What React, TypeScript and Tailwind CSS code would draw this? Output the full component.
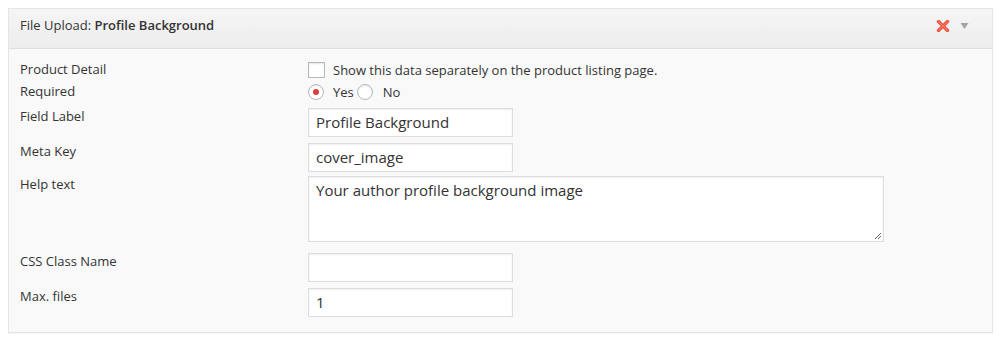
import React from "react";

const font = { fontFamily: '"Open Sans", "Noto Sans", sans-serif' };

function Row({
  label,
  className,
  children,
}: {
  label: string;
  className?: string;
  children: React.ReactNode;
}) {
  return (
    <div className={"flex " + (className || "")}>
      <div className="w-[288px] shrink-0 text-[13px] leading-[16px] text-[#333]">{label}</div>
      <div className="flex-1">{children}</div>
    </div>
  );
}

function TextInput({ value }: { value: string }) {
  return (
    <div className="w-[205px] h-[29px] bg-white border border-[#ddd] shadow-[inset_0_1px_2px_rgba(0,0,0,0.07)] px-[7px] flex items-center text-[15px] text-[#333]">
      {value}
    </div>
  );
}

function Radio({ checked }: { checked?: boolean }) {
  return (
    <span className="w-[16px] h-[16px] rounded-full border border-[#b4b9be] bg-white shadow-[inset_0_1px_2px_rgba(0,0,0,0.1)] flex items-center justify-center shrink-0">
      {checked && <span className="w-[6px] h-[6px] rounded-full bg-[#dd3d36]" />}
    </span>
  );
}

export default function App() {
  return (
    <div className="w-[1000px] h-[347px] bg-white pt-[8px] px-[8px]" style={font}>
      <div className="w-[985px] border border-[#e5e5e5] shadow-[0_1px_1px_rgba(0,0,0,0.04)] bg-[#f9f9f9]">
        <div className="h-[40px] flex items-start justify-between pt-[8px] px-[11px] bg-gradient-to-b from-[#f5f5f5] to-[#ededed] border-b border-[#dfdfdf] text-[13px] leading-[16px] text-[#333]">
          <div>
            File Upload: <span className="font-semibold">Profile Background</span>
          </div>
          <div className="flex items-center gap-[10px] pr-[12px] pt-[3px]">
            <svg width="14" height="12" viewBox="0 0 14 12">
              <path d="M2.5 1.5 L11.5 10.5 M11.5 1.5 L2.5 10.5" stroke="#ef5a45" strokeWidth="3.4" strokeLinecap="round" />
              <path d="M3 2 L11 10 M11 2 L3 10" stroke="#f8907c" strokeWidth="1" strokeLinecap="round" opacity="0.6" />
            </svg>
            <svg width="9" height="8" viewBox="0 0 9 8">
              <path d="M0.5 1 L8.5 1 L4.5 7 Z" fill="#a0a5aa" />
            </svg>
          </div>
        </div>
        <div className="pl-[11px] pt-[12px] pb-[15px]">
          <Row label="Product Detail" className="h-[22px]">
            <div className="flex items-start mt-[1px]">
              <span className="w-[17px] h-[16px] border border-[#b4b9be] bg-white shadow-[inset_0_1px_2px_rgba(0,0,0,0.1)]" />
              <span className="ml-[8px] text-[13px] leading-[16px] text-[#333]">
                Show this data separately on the product listing page.
              </span>
            </div>
          </Row>
          <Row label="Required" className="h-[25px]">
            <div className="flex items-center mt-[1px] text-[13px] leading-[16px] text-[#333]">
              <Radio checked />
              <span className="ml-[9px]">Yes</span>
              <span className="ml-[3px]"><Radio /></span>
              <span className="ml-[10px]">No</span>
            </div>
          </Row>
          <Row label="Field Label" className="mb-[6px]">
            <TextInput value="Profile Background" />
          </Row>
          <Row label="Meta Key" className="mb-[4px]">
            <TextInput value="cover_image" />
          </Row>
          <Row label="Help text" className="mb-[11px]">
            <div className="relative w-[576px] h-[66px] bg-white border border-[#ddd] shadow-[inset_0_1px_2px_rgba(0,0,0,0.07)] px-[7px] pt-[3px] text-[15px] leading-[20px] text-[#333]">
              Your author profile background image
              <svg className="absolute right-[1px] bottom-[1px]" width="8" height="8" viewBox="0 0 8 8">
                <path d="M7 1 L1 7 M7 4 L4 7" stroke="#666" strokeWidth="1" />
              </svg>
            </div>
          </Row>
          <Row label="CSS Class Name" className="mb-[6px]">
            <TextInput value="" />
          </Row>
          <Row label="Max. files">
            <TextInput value="1" />
          </Row>
        </div>
      </div>
    </div>
  );
}
